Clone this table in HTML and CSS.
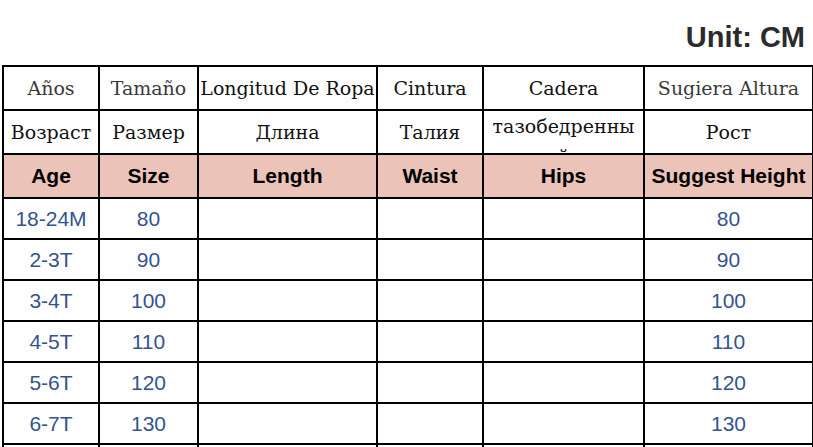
FILE: index.html
```html
<!DOCTYPE html>
<html>
<head>
<meta charset="utf-8">
<link rel="stylesheet" href="styles.css">
</head>
<body>
<div class="unit">Unit: CM</div>
<table class="chart">
  <colgroup>
    <col class="c1"><col class="c2"><col class="c3"><col class="c4"><col class="c5"><col class="c6">
  </colgroup>
  <tr class="es">
    <td class="grey">Años</td><td class="grey">Tamaño</td><td>Longitud De Ropa</td><td>Cintura</td><td>Cadera</td><td class="grey">Sugiera Altura</td>
  </tr>
  <tr class="ru">
    <td>Возраст</td><td>Размер</td><td>Длина</td><td>Талия</td><td class="clipcell"><div class="clip">тазобедренны<wbr>й</div></td><td>Рост</td>
  </tr>
  <tr class="en">
    <td>Age</td><td>Size</td><td>Length</td><td>Waist</td><td>Hips</td><td>Suggest Height</td>
  </tr>
  <tr class="data"><td>18-24M</td><td>80</td><td></td><td></td><td></td><td>80</td></tr>
  <tr class="data"><td>2-3T</td><td>90</td><td></td><td></td><td></td><td>90</td></tr>
  <tr class="data"><td>3-4T</td><td>100</td><td></td><td></td><td></td><td>100</td></tr>
  <tr class="data"><td>4-5T</td><td>110</td><td></td><td></td><td></td><td>110</td></tr>
  <tr class="data"><td>5-6T</td><td>120</td><td></td><td></td><td></td><td>120</td></tr>
  <tr class="data"><td>6-7T</td><td>130</td><td></td><td></td><td></td><td>130</td></tr>
  <tr class="data"><td>7-8T</td><td>140</td><td></td><td></td><td></td><td>140</td></tr>
</table>
</body>
</html>
```
FILE: styles.css
```css
html, body {
  margin: 0;
  padding: 0;
  background: #fff;
  overflow: hidden;
  height: 447px;
}
.unit {
  height: 65px;
  box-sizing: border-box;
  padding: 20px 8px 0 0;
  text-align: right;
  font-family: "Liberation Sans", Arial, sans-serif;
  font-weight: bold;
  font-size: 29px;
  line-height: 34px;
  color: #2b2b2b;
}
.chart {
  margin-left: 2px;
  border-collapse: collapse;
  table-layout: fixed;
  width: 810px;
}
.c1 { width: 96px; }
.c2 { width: 99px; }
.c3 { width: 179px; }
.c4 { width: 106px; }
.c5 { width: 161px; }
.c6 { width: 169px; }
.chart td {
  border: 2px solid #000;
  padding: 0;
  text-align: center;
  vertical-align: middle;
  white-space: nowrap;
  overflow: hidden;
}
.es td, .ru td {
  height: 42px;
  font-family: "DejaVu Serif", "Liberation Serif", serif;
  font-size: 19px;
  color: #111;
}
.es td.grey { color: #3a3a3a; }
.en td {
  height: 42px;
  background: #ebc3b8;
  font-family: "Liberation Sans", Arial, sans-serif;
  font-weight: bold;
  font-size: 21px;
  color: #000;
}
.data td {
  height: 39px;
  font-family: "Liberation Sans", Arial, sans-serif;
  font-size: 21px;
  color: #34538f;
}
.chart td.clipcell {
  white-space: normal;
}
.clip {
  width: 148px;
  height: 42px;
  margin: 0 auto;
  overflow: hidden;
  padding-top: 0;
  box-sizing: border-box;
  line-height: 30px;
}
```
